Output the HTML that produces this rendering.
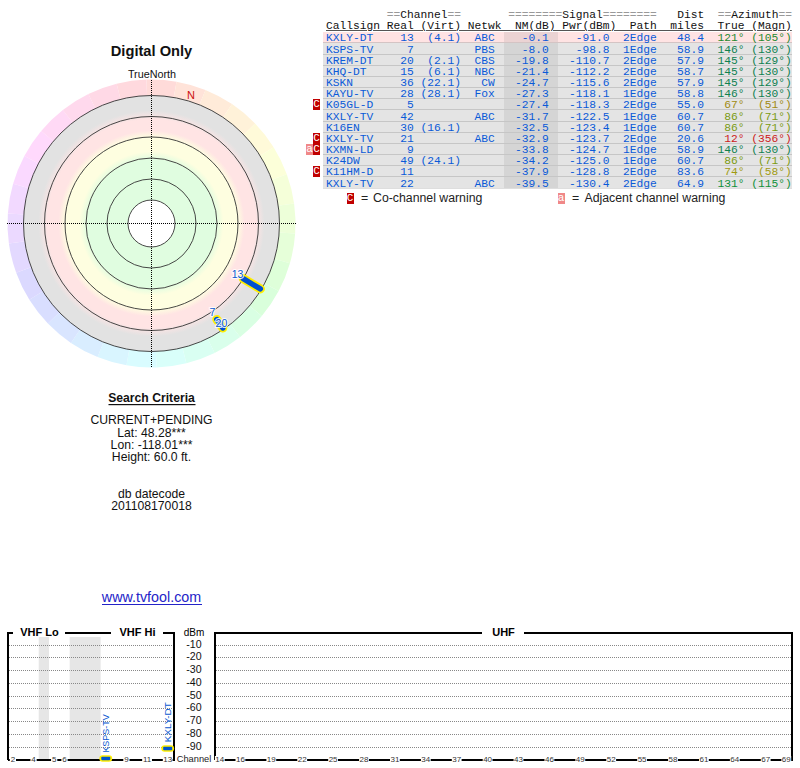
<!DOCTYPE html>
<html><head><meta charset="utf-8">
<style>
html,body{margin:0;padding:0;background:#fff;}
body{width:800px;height:768px;position:relative;overflow:hidden;font-family:"Liberation Sans",sans-serif;color:#111;}
svg{position:absolute;left:0;top:0;}
.row{position:absolute;left:323px;width:469px;box-sizing:border-box;border-bottom:1px solid #c6c6c6;}
.nm{position:absolute;left:181px;width:54px;top:0;bottom:0;}
.tl,.hd{position:absolute;left:326px;font-family:"Liberation Mono",monospace;font-size:11.25px;line-height:12px;white-space:pre;color:#0a5ad8;}
.hd{color:#111;}
.g{color:#999;}
.wc,.wa{position:absolute;width:7px;height:11px;color:#fff;font-family:"Liberation Mono",monospace;font-size:11px;line-height:11px;text-align:center;}
.wc{background:#c00000;}
.wa{background:#f08888;}
</style></head><body>
<svg width="800" height="768" viewBox="0 0 800 768">
<path d="M146.47 79.59 A144 144 0 0 1 176.51 81.69 L173.64 97.94 A127.5 127.5 0 0 0 147.05 96.08 Z" fill="#ffdbd9"/>
<path d="M176.51 81.69 A144 144 0 0 1 205.44 89.99 L199.26 105.28 A127.5 127.5 0 0 0 173.64 97.94 Z" fill="#ffe3d9"/>
<path d="M205.44 89.99 A144 144 0 0 1 232.02 104.12 L222.80 117.80 A127.5 127.5 0 0 0 199.26 105.28 Z" fill="#ffebd9"/>
<path d="M232.02 104.12 A144 144 0 0 1 255.08 123.47 L243.22 134.93 A127.5 127.5 0 0 0 222.80 117.80 Z" fill="#fff2d9"/>
<path d="M255.08 123.47 A144 144 0 0 1 273.62 147.19 L259.63 155.94 A127.5 127.5 0 0 0 243.22 134.93 Z" fill="#fffad9"/>
<path d="M273.62 147.19 A144 144 0 0 1 286.82 174.25 L271.31 179.89 A127.5 127.5 0 0 0 259.63 155.94 Z" fill="#fcffd9"/>
<path d="M286.82 174.25 A144 144 0 0 1 294.10 203.46 L277.76 205.76 A127.5 127.5 0 0 0 271.31 179.89 Z" fill="#f5ffd9"/>
<path d="M294.10 203.46 A144 144 0 0 1 295.15 233.54 L278.69 232.39 A127.5 127.5 0 0 0 277.76 205.76 Z" fill="#edffd9"/>
<path d="M295.15 233.54 A144 144 0 0 1 289.92 263.19 L274.06 258.64 A127.5 127.5 0 0 0 278.69 232.39 Z" fill="#e6ffd9"/>
<path d="M289.92 263.19 A144 144 0 0 1 278.64 291.10 L264.08 283.36 A127.5 127.5 0 0 0 274.06 258.64 Z" fill="#deffd9"/>
<path d="M278.64 291.10 A144 144 0 0 1 261.81 316.06 L249.17 305.46 A127.5 127.5 0 0 0 264.08 283.36 Z" fill="#d9ffdb"/>
<path d="M261.81 316.06 A144 144 0 0 1 240.16 336.97 L230.00 323.97 A127.5 127.5 0 0 0 249.17 305.46 Z" fill="#d9ffe3"/>
<path d="M240.16 336.97 A144 144 0 0 1 214.63 352.93 L207.39 338.10 A127.5 127.5 0 0 0 230.00 323.97 Z" fill="#d9ffeb"/>
<path d="M214.63 352.93 A144 144 0 0 1 186.34 363.22 L182.35 347.21 A127.5 127.5 0 0 0 207.39 338.10 Z" fill="#d9fff2"/>
<path d="M186.34 363.22 A144 144 0 0 1 156.53 367.41 L155.95 350.92 A127.5 127.5 0 0 0 182.35 347.21 Z" fill="#d9fffa"/>
<path d="M156.53 367.41 A144 144 0 0 1 126.49 365.31 L129.36 349.06 A127.5 127.5 0 0 0 155.95 350.92 Z" fill="#d9fcff"/>
<path d="M126.49 365.31 A144 144 0 0 1 97.56 357.01 L103.74 341.72 A127.5 127.5 0 0 0 129.36 349.06 Z" fill="#d9f5ff"/>
<path d="M97.56 357.01 A144 144 0 0 1 70.98 342.88 L80.20 329.20 A127.5 127.5 0 0 0 103.74 341.72 Z" fill="#d9edff"/>
<path d="M70.98 342.88 A144 144 0 0 1 47.92 323.53 L59.78 312.07 A127.5 127.5 0 0 0 80.20 329.20 Z" fill="#d9e5ff"/>
<path d="M47.92 323.53 A144 144 0 0 1 29.38 299.81 L43.37 291.06 A127.5 127.5 0 0 0 59.78 312.07 Z" fill="#d9deff"/>
<path d="M29.38 299.81 A144 144 0 0 1 16.18 272.75 L31.69 267.11 A127.5 127.5 0 0 0 43.37 291.06 Z" fill="#dbd9ff"/>
<path d="M16.18 272.75 A144 144 0 0 1 8.90 243.54 L25.24 241.24 A127.5 127.5 0 0 0 31.69 267.11 Z" fill="#e3d9ff"/>
<path d="M8.90 243.54 A144 144 0 0 1 7.85 213.46 L24.31 214.61 A127.5 127.5 0 0 0 25.24 241.24 Z" fill="#ebd9ff"/>
<path d="M7.85 213.46 A144 144 0 0 1 13.08 183.81 L28.94 188.36 A127.5 127.5 0 0 0 24.31 214.61 Z" fill="#f2d9ff"/>
<path d="M13.08 183.81 A144 144 0 0 1 24.36 155.90 L38.92 163.64 A127.5 127.5 0 0 0 28.94 188.36 Z" fill="#fad9ff"/>
<path d="M24.36 155.90 A144 144 0 0 1 41.19 130.94 L53.83 141.54 A127.5 127.5 0 0 0 38.92 163.64 Z" fill="#ffd9fc"/>
<path d="M41.19 130.94 A144 144 0 0 1 62.84 110.03 L73.00 123.03 A127.5 127.5 0 0 0 53.83 141.54 Z" fill="#ffd9f5"/>
<path d="M62.84 110.03 A144 144 0 0 1 88.37 94.07 L95.61 108.90 A127.5 127.5 0 0 0 73.00 123.03 Z" fill="#ffd9ed"/>
<path d="M88.37 94.07 A144 144 0 0 1 116.66 83.78 L120.65 99.79 A127.5 127.5 0 0 0 95.61 108.90 Z" fill="#ffd9e6"/>
<path d="M116.66 83.78 A144 144 0 0 1 146.47 79.59 L147.05 96.08 A127.5 127.5 0 0 0 120.65 99.79 Z" fill="#ffd9de"/>
<defs><radialGradient id="bands" cx="151.5" cy="223.5" r="128" gradientUnits="userSpaceOnUse">
<stop offset="0" stop-color="#e0fde0"/>
<stop offset="0.5000" stop-color="#e0fde0"/>
<stop offset="0.5625" stop-color="#fefee0"/>
<stop offset="0.6719" stop-color="#fefee0"/>
<stop offset="0.7266" stop-color="#ffe4e4"/>
<stop offset="0.8125" stop-color="#ffe4e4"/>
<stop offset="0.8828" stop-color="#e2e2e2"/>
<stop offset="1" stop-color="#e2e2e2"/>
</radialGradient></defs>
<circle cx="151.5" cy="223.5" r="128" fill="url(#bands)"/>
<circle cx="151.5" cy="223.5" r="23.5" fill="#fff"/>
<circle cx="151.5" cy="223.5" r="23.5" fill="none" stroke="#333" stroke-width="0.9"/>
<circle cx="151.5" cy="223.5" r="44.5" fill="none" stroke="#333" stroke-width="0.9"/>
<circle cx="151.5" cy="223.5" r="65.5" fill="none" stroke="#333" stroke-width="0.9"/>
<circle cx="151.5" cy="223.5" r="86.5" fill="none" stroke="#333" stroke-width="0.9"/>
<circle cx="151.5" cy="223.5" r="107" fill="none" stroke="#333" stroke-width="0.9"/>
<circle cx="151.5" cy="223.5" r="128" fill="none" stroke="#333" stroke-width="0.9"/>
<line x1="7" y1="223.5" x2="297" y2="223.5" stroke="#000" stroke-width="1" stroke-dasharray="1 1"/>
<line x1="151.5" y1="80" x2="151.5" y2="367" stroke="#000" stroke-width="1" stroke-dasharray="1 1"/>
<text x="191" y="99" font-family="Liberation Sans" font-size="11" fill="#cc1010" text-anchor="middle">N</text>
<line x1="243.217" y1="278.609" x2="260.36" y2="288.91" stroke="#ffee00" stroke-width="9" stroke-linecap="round"/><line x1="243.217" y1="278.609" x2="260.36" y2="288.91" stroke="#0050d0" stroke-width="5.4" stroke-linecap="round"/>
<line x1="216.8" y1="319.5" x2="222.8" y2="328" stroke="#ffee00" stroke-width="9" stroke-linecap="round"/><line x1="216.8" y1="319.5" x2="222.8" y2="328" stroke="#0050d0" stroke-width="5.4" stroke-linecap="round"/>
<text x="237.6" y="278.3" font-family="Liberation Sans" font-size="10.5" text-anchor="middle" fill="none" stroke="#fff" stroke-width="2.2" stroke-opacity="0.85" stroke-linejoin="round">13</text><text x="237.6" y="278.3" font-family="Liberation Sans" font-size="10.5" text-anchor="middle" fill="#0a58d0">13</text>
<text x="212.4" y="315.5" font-family="Liberation Sans" font-size="10.5" text-anchor="middle" fill="none" stroke="#fff" stroke-width="2.2" stroke-opacity="0.85" stroke-linejoin="round">7</text><text x="212.4" y="315.5" font-family="Liberation Sans" font-size="10.5" text-anchor="middle" fill="#0a58d0">7</text>
<text x="221.4" y="326.7" font-family="Liberation Sans" font-size="10.5" text-anchor="middle" fill="none" stroke="#fff" stroke-width="2.2" stroke-opacity="0.85" stroke-linejoin="round">20</text><text x="221.4" y="326.7" font-family="Liberation Sans" font-size="10.5" text-anchor="middle" fill="#0a58d0">20</text>
<rect x="38.70" y="637" width="10.32" height="122" fill="#e6e6e6"/>
<rect x="69.66" y="637" width="30.96" height="122" fill="#e6e6e6"/>
<line x1="9" y1="645.5" x2="172" y2="645.5" stroke="#888" stroke-width="1" stroke-dasharray="1 1"/>
<line x1="216" y1="645.5" x2="791" y2="645.5" stroke="#888" stroke-width="1" stroke-dasharray="1 1"/>
<line x1="9" y1="657.5" x2="172" y2="657.5" stroke="#888" stroke-width="1" stroke-dasharray="1 1"/>
<line x1="216" y1="657.5" x2="791" y2="657.5" stroke="#888" stroke-width="1" stroke-dasharray="1 1"/>
<line x1="9" y1="670.5" x2="172" y2="670.5" stroke="#888" stroke-width="1" stroke-dasharray="1 1"/>
<line x1="216" y1="670.5" x2="791" y2="670.5" stroke="#888" stroke-width="1" stroke-dasharray="1 1"/>
<line x1="9" y1="683.5" x2="172" y2="683.5" stroke="#888" stroke-width="1" stroke-dasharray="1 1"/>
<line x1="216" y1="683.5" x2="791" y2="683.5" stroke="#888" stroke-width="1" stroke-dasharray="1 1"/>
<line x1="9" y1="696.5" x2="172" y2="696.5" stroke="#888" stroke-width="1" stroke-dasharray="1 1"/>
<line x1="216" y1="696.5" x2="791" y2="696.5" stroke="#888" stroke-width="1" stroke-dasharray="1 1"/>
<line x1="9" y1="708.5" x2="172" y2="708.5" stroke="#888" stroke-width="1" stroke-dasharray="1 1"/>
<line x1="216" y1="708.5" x2="791" y2="708.5" stroke="#888" stroke-width="1" stroke-dasharray="1 1"/>
<line x1="9" y1="721.5" x2="172" y2="721.5" stroke="#888" stroke-width="1" stroke-dasharray="1 1"/>
<line x1="216" y1="721.5" x2="791" y2="721.5" stroke="#888" stroke-width="1" stroke-dasharray="1 1"/>
<line x1="9" y1="734.5" x2="172" y2="734.5" stroke="#888" stroke-width="1" stroke-dasharray="1 1"/>
<line x1="216" y1="734.5" x2="791" y2="734.5" stroke="#888" stroke-width="1" stroke-dasharray="1 1"/>
<line x1="9" y1="747.5" x2="172" y2="747.5" stroke="#888" stroke-width="1" stroke-dasharray="1 1"/>
<line x1="216" y1="747.5" x2="791" y2="747.5" stroke="#888" stroke-width="1" stroke-dasharray="1 1"/>
<path d="M8 760 V633 H13 M65 633 H111 M163 633 H174 V760 H8" fill="none" stroke="#000" stroke-width="2"/>
<path d="M215 760 V633 H482 M524 633 H792 V760 H215" fill="none" stroke="#000" stroke-width="2"/>
<text x="39.5" y="636" font-family="Liberation Sans" font-weight="bold" font-size="11" text-anchor="middle">VHF Lo</text>
<text x="137.5" y="636" font-family="Liberation Sans" font-weight="bold" font-size="11" text-anchor="middle">VHF Hi</text>
<text x="503.5" y="636" font-family="Liberation Sans" font-weight="bold" font-size="11" text-anchor="middle">UHF</text>
<text x="194" y="635.5" font-family="Liberation Sans" font-size="10" text-anchor="middle">dBm</text>
<text x="194" y="647.5" font-family="Liberation Sans" font-size="10.6" text-anchor="middle" fill="#111">-10</text>
<text x="194" y="660.2" font-family="Liberation Sans" font-size="10.6" text-anchor="middle" fill="#111">-20</text>
<text x="194" y="673.0" font-family="Liberation Sans" font-size="10.6" text-anchor="middle" fill="#111">-30</text>
<text x="194" y="685.7" font-family="Liberation Sans" font-size="10.6" text-anchor="middle" fill="#111">-40</text>
<text x="194" y="698.5" font-family="Liberation Sans" font-size="10.6" text-anchor="middle" fill="#111">-50</text>
<text x="194" y="711.2" font-family="Liberation Sans" font-size="10.6" text-anchor="middle" fill="#111">-60</text>
<text x="194" y="724.0" font-family="Liberation Sans" font-size="10.6" text-anchor="middle" fill="#111">-70</text>
<text x="194" y="736.7" font-family="Liberation Sans" font-size="10.6" text-anchor="middle" fill="#111">-80</text>
<text x="194" y="749.5" font-family="Liberation Sans" font-size="10.6" text-anchor="middle" fill="#111">-90</text>
<text x="194" y="761.5" font-family="Liberation Sans" font-size="9.6" text-anchor="middle" textLength="34.5" lengthAdjust="spacingAndGlyphs" fill="#222">Channel</text>
<rect x="9.80" y="756" width="6.20" height="7" fill="#fff"/><text x="12.90" y="762" font-family="Liberation Sans" font-size="8" text-anchor="middle" fill="#333">2</text>
<rect x="30.44" y="756" width="6.20" height="7" fill="#fff"/><text x="33.54" y="762" font-family="Liberation Sans" font-size="8" text-anchor="middle" fill="#333">4</text>
<rect x="51.08" y="756" width="6.20" height="7" fill="#fff"/><text x="54.18" y="762" font-family="Liberation Sans" font-size="8" text-anchor="middle" fill="#333">5</text>
<rect x="61.40" y="756" width="6.20" height="7" fill="#fff"/><text x="64.50" y="762" font-family="Liberation Sans" font-size="8" text-anchor="middle" fill="#333">6</text>
<rect x="123.32" y="756" width="6.20" height="7" fill="#fff"/><text x="126.42" y="762" font-family="Liberation Sans" font-size="8" text-anchor="middle" fill="#333">9</text>
<rect x="142.16" y="756" width="9.80" height="7" fill="#fff"/><text x="147.06" y="762" font-family="Liberation Sans" font-size="8" text-anchor="middle" fill="#333">11</text>
<rect x="162.80" y="756" width="9.80" height="7" fill="#fff"/><text x="167.70" y="762" font-family="Liberation Sans" font-size="8" text-anchor="middle" fill="#333">13</text>
<rect x="214.90" y="756" width="9.80" height="7" fill="#fff"/><text x="219.80" y="762" font-family="Liberation Sans" font-size="8" text-anchor="middle" fill="#333">14</text>
<rect x="235.50" y="756" width="9.80" height="7" fill="#fff"/><text x="240.40" y="762" font-family="Liberation Sans" font-size="8" text-anchor="middle" fill="#333">16</text>
<rect x="266.40" y="756" width="9.80" height="7" fill="#fff"/><text x="271.30" y="762" font-family="Liberation Sans" font-size="8" text-anchor="middle" fill="#333">19</text>
<rect x="297.30" y="756" width="9.80" height="7" fill="#fff"/><text x="302.20" y="762" font-family="Liberation Sans" font-size="8" text-anchor="middle" fill="#333">22</text>
<rect x="328.20" y="756" width="9.80" height="7" fill="#fff"/><text x="333.10" y="762" font-family="Liberation Sans" font-size="8" text-anchor="middle" fill="#333">25</text>
<rect x="359.10" y="756" width="9.80" height="7" fill="#fff"/><text x="364.00" y="762" font-family="Liberation Sans" font-size="8" text-anchor="middle" fill="#333">28</text>
<rect x="390.00" y="756" width="9.80" height="7" fill="#fff"/><text x="394.90" y="762" font-family="Liberation Sans" font-size="8" text-anchor="middle" fill="#333">31</text>
<rect x="420.90" y="756" width="9.80" height="7" fill="#fff"/><text x="425.80" y="762" font-family="Liberation Sans" font-size="8" text-anchor="middle" fill="#333">34</text>
<rect x="451.80" y="756" width="9.80" height="7" fill="#fff"/><text x="456.70" y="762" font-family="Liberation Sans" font-size="8" text-anchor="middle" fill="#333">37</text>
<rect x="482.70" y="756" width="9.80" height="7" fill="#fff"/><text x="487.60" y="762" font-family="Liberation Sans" font-size="8" text-anchor="middle" fill="#333">40</text>
<rect x="513.60" y="756" width="9.80" height="7" fill="#fff"/><text x="518.50" y="762" font-family="Liberation Sans" font-size="8" text-anchor="middle" fill="#333">43</text>
<rect x="544.50" y="756" width="9.80" height="7" fill="#fff"/><text x="549.40" y="762" font-family="Liberation Sans" font-size="8" text-anchor="middle" fill="#333">46</text>
<rect x="575.40" y="756" width="9.80" height="7" fill="#fff"/><text x="580.30" y="762" font-family="Liberation Sans" font-size="8" text-anchor="middle" fill="#333">49</text>
<rect x="606.30" y="756" width="9.80" height="7" fill="#fff"/><text x="611.20" y="762" font-family="Liberation Sans" font-size="8" text-anchor="middle" fill="#333">52</text>
<rect x="637.20" y="756" width="9.80" height="7" fill="#fff"/><text x="642.10" y="762" font-family="Liberation Sans" font-size="8" text-anchor="middle" fill="#333">55</text>
<rect x="668.10" y="756" width="9.80" height="7" fill="#fff"/><text x="673.00" y="762" font-family="Liberation Sans" font-size="8" text-anchor="middle" fill="#333">58</text>
<rect x="699.00" y="756" width="9.80" height="7" fill="#fff"/><text x="703.90" y="762" font-family="Liberation Sans" font-size="8" text-anchor="middle" fill="#333">61</text>
<rect x="729.90" y="756" width="9.80" height="7" fill="#fff"/><text x="734.80" y="762" font-family="Liberation Sans" font-size="8" text-anchor="middle" fill="#333">64</text>
<rect x="760.80" y="756" width="9.80" height="7" fill="#fff"/><text x="765.70" y="762" font-family="Liberation Sans" font-size="8" text-anchor="middle" fill="#333">67</text>
<rect x="781.40" y="756" width="9.80" height="7" fill="#fff"/><text x="786.30" y="762" font-family="Liberation Sans" font-size="8" text-anchor="middle" fill="#333">69</text>
<rect x="99.38" y="755.17" width="12.8" height="6.6" rx="3.3" fill="#ffee00"/><rect x="101.28" y="756.77" width="9" height="3.4" rx="0.8" fill="#0055cc"/>
<rect x="161.30" y="745.23" width="12.8" height="6.6" rx="3.3" fill="#ffee00"/><rect x="163.20" y="746.82" width="9" height="3.4" rx="0.8" fill="#0055cc"/>
<text transform="translate(109.18 752.60) rotate(-90)" font-family="Liberation Sans" font-size="9.2" fill="#0a58d0" textLength="38.2" lengthAdjust="spacingAndGlyphs">KSPS-TV</text>
<text transform="translate(171.10 742.30) rotate(-90)" font-family="Liberation Sans" font-size="9.5" fill="#0a58d0" textLength="40.1" lengthAdjust="spacingAndGlyphs">KXLY-DT</text>
<text x="151.5" y="56" font-family="Liberation Sans" font-size="15.2" font-weight="bold" fill="#111" text-anchor="middle" textLength="81.5" lengthAdjust="spacingAndGlyphs">Digital Only</text>
<text x="152" y="78" font-family="Liberation Sans" font-size="10.8" font-weight="normal" fill="#111" text-anchor="middle" >TrueNorth</text>
<text x="151.5" y="402" font-family="Liberation Sans" font-size="12.2" font-weight="bold" fill="#111" text-anchor="middle" >Search Criteria</text>
<rect x="108.5" y="404" width="87" height="1.2" fill="#111"/>
<text x="151.5" y="424" font-family="Liberation Sans" font-size="12.2" font-weight="normal" fill="#111" text-anchor="middle" >CURRENT+PENDING</text>
<text x="151.5" y="436.5" font-family="Liberation Sans" font-size="12.2" font-weight="normal" fill="#111" text-anchor="middle" >Lat: 48.28***</text>
<text x="151.5" y="448.7" font-family="Liberation Sans" font-size="12.2" font-weight="normal" fill="#111" text-anchor="middle" >Lon: -118.01***</text>
<text x="151.5" y="460.5" font-family="Liberation Sans" font-size="12.2" font-weight="normal" fill="#111" text-anchor="middle" >Height: 60.0 ft.</text>
<text x="151.5" y="497.8" font-family="Liberation Sans" font-size="12.2" font-weight="normal" fill="#111" text-anchor="middle" >db datecode</text>
<text x="151.5" y="510" font-family="Liberation Sans" font-size="12.2" font-weight="normal" fill="#111" text-anchor="middle" >201108170018</text>
<text x="151.5" y="602.3" font-family="Liberation Sans" font-size="14.3" font-weight="normal" fill="#2323c8" text-anchor="middle" >www.tvfool.com</text>
<rect x="102" y="604" width="100" height="1" fill="#2323c8"/>
<text x="361" y="202" font-family="Liberation Sans" font-size="12.3" font-weight="normal" fill="#222" text-anchor="start" >=</text>
<text x="373" y="202" font-family="Liberation Sans" font-size="12.3" font-weight="normal" fill="#222" text-anchor="start" >Co-channel warning</text>
<text x="572" y="202" font-family="Liberation Sans" font-size="12.3" font-weight="normal" fill="#222" text-anchor="start" >=</text>
<text x="584.5" y="202" font-family="Liberation Sans" font-size="12.3" font-weight="normal" fill="#222" text-anchor="start" >Adjacent channel warning</text>
</svg>
<div class="row" style="top:32px;height:11px;background:#ffe3e3;border-bottom-color:#d4c4c4"><div class="nm" style="background:#ebd3d3"></div></div>
<div class="tl" style="top:32.00px">KXLY-DT&#160;&#160;&#160;&#160;13&#160;&#160;(4.1)&#160;&#160;ABC&#160;&#160;&#160;&#160;-0.1&#160;&#160;&#160;&#160;-91.0&#160;&#160;2Edge&#160;&#160;&#160;48.4&#160;&#160;</div>
<div class="tl" style="top:32.00px;left:717.50px;color:#1e8a30">121°&#160;(105°)</div>
<div class="row" style="top:43px;height:12px;background:#e4e4e4;border-bottom-color:#c6c6c6"><div class="nm" style="background:#d5d5d5"></div></div>
<div class="tl" style="top:44.00px">KSPS-TV&#160;&#160;&#160;&#160;&#160;7&#160;&#160;&#160;&#160;&#160;&#160;&#160;&#160;&#160;PBS&#160;&#160;&#160;&#160;-8.0&#160;&#160;&#160;&#160;-98.8&#160;&#160;1Edge&#160;&#160;&#160;58.9&#160;&#160;</div>
<div class="tl" style="top:44.00px;left:717.50px;color:#0f8050">146°&#160;(130°)</div>
<div class="row" style="top:55px;height:11px;background:#e4e4e4;border-bottom-color:#c6c6c6"><div class="nm" style="background:#d5d5d5"></div></div>
<div class="tl" style="top:55.00px">KREM-DT&#160;&#160;&#160;&#160;20&#160;&#160;(2.1)&#160;&#160;CBS&#160;&#160;&#160;-19.8&#160;&#160;&#160;-110.7&#160;&#160;2Edge&#160;&#160;&#160;57.9&#160;&#160;</div>
<div class="tl" style="top:55.00px;left:717.50px;color:#0f8050">145°&#160;(129°)</div>
<div class="row" style="top:66px;height:11px;background:#e4e4e4;border-bottom-color:#c6c6c6"><div class="nm" style="background:#d5d5d5"></div></div>
<div class="tl" style="top:66.00px">KHQ-DT&#160;&#160;&#160;&#160;&#160;15&#160;&#160;(6.1)&#160;&#160;NBC&#160;&#160;&#160;-21.4&#160;&#160;&#160;-112.2&#160;&#160;2Edge&#160;&#160;&#160;58.7&#160;&#160;</div>
<div class="tl" style="top:66.00px;left:717.50px;color:#0f8050">145°&#160;(130°)</div>
<div class="row" style="top:77px;height:11px;background:#e4e4e4;border-bottom-color:#c6c6c6"><div class="nm" style="background:#d5d5d5"></div></div>
<div class="tl" style="top:77.00px">KSKN&#160;&#160;&#160;&#160;&#160;&#160;&#160;36&#160;(22.1)&#160;&#160;&#160;CW&#160;&#160;&#160;-24.7&#160;&#160;&#160;-115.6&#160;&#160;2Edge&#160;&#160;&#160;57.9&#160;&#160;</div>
<div class="tl" style="top:77.00px;left:717.50px;color:#0f8050">145°&#160;(129°)</div>
<div class="row" style="top:88px;height:11px;background:#e4e4e4;border-bottom-color:#c6c6c6"><div class="nm" style="background:#d5d5d5"></div></div>
<div class="tl" style="top:88.00px">KAYU-TV&#160;&#160;&#160;&#160;28&#160;(28.1)&#160;&#160;Fox&#160;&#160;&#160;-27.3&#160;&#160;&#160;-118.1&#160;&#160;1Edge&#160;&#160;&#160;58.8&#160;&#160;</div>
<div class="tl" style="top:88.00px;left:717.50px;color:#0f8050">146°&#160;(130°)</div>
<div class="row" style="top:99px;height:11px;background:#e4e4e4;border-bottom-color:#c6c6c6"><div class="nm" style="background:#d5d5d5"></div></div>
<div class="tl" style="top:99.00px">K05GL-D&#160;&#160;&#160;&#160;&#160;5&#160;&#160;&#160;&#160;&#160;&#160;&#160;&#160;&#160;&#160;&#160;&#160;&#160;&#160;&#160;-27.4&#160;&#160;&#160;-118.3&#160;&#160;2Edge&#160;&#160;&#160;55.0&#160;&#160;</div>
<div class="tl" style="top:99.00px;left:717.50px;color:#a08a10">&#160;67°&#160;&#160;(51°)</div>
<div class="wc" style="top:99px;left:313px">C</div>
<div class="row" style="top:110px;height:12px;background:#e4e4e4;border-bottom-color:#c6c6c6"><div class="nm" style="background:#d5d5d5"></div></div>
<div class="tl" style="top:111.00px">KXLY-TV&#160;&#160;&#160;&#160;42&#160;&#160;&#160;&#160;&#160;&#160;&#160;&#160;&#160;ABC&#160;&#160;&#160;-31.7&#160;&#160;&#160;-122.5&#160;&#160;1Edge&#160;&#160;&#160;60.7&#160;&#160;</div>
<div class="tl" style="top:111.00px;left:717.50px;color:#7a9a10">&#160;86°&#160;&#160;(71°)</div>
<div class="row" style="top:122px;height:11px;background:#e4e4e4;border-bottom-color:#c6c6c6"><div class="nm" style="background:#d5d5d5"></div></div>
<div class="tl" style="top:122.00px">K16EN&#160;&#160;&#160;&#160;&#160;&#160;30&#160;(16.1)&#160;&#160;&#160;&#160;&#160;&#160;&#160;&#160;-32.5&#160;&#160;&#160;-123.4&#160;&#160;1Edge&#160;&#160;&#160;60.7&#160;&#160;</div>
<div class="tl" style="top:122.00px;left:717.50px;color:#7a9a10">&#160;86°&#160;&#160;(71°)</div>
<div class="row" style="top:133px;height:11px;background:#e4e4e4;border-bottom-color:#c6c6c6"><div class="nm" style="background:#d5d5d5"></div></div>
<div class="tl" style="top:133.00px">KXLY-TV&#160;&#160;&#160;&#160;21&#160;&#160;&#160;&#160;&#160;&#160;&#160;&#160;&#160;ABC&#160;&#160;&#160;-32.9&#160;&#160;&#160;-123.7&#160;&#160;2Edge&#160;&#160;&#160;20.6&#160;&#160;</div>
<div class="tl" style="top:133.00px;left:717.50px;color:#cc2020">&#160;12°&#160;(356°)</div>
<div class="wc" style="top:133px;left:313px">C</div>
<div class="row" style="top:144px;height:11px;background:#e4e4e4;border-bottom-color:#c6c6c6"><div class="nm" style="background:#d5d5d5"></div></div>
<div class="tl" style="top:144.00px">KXMN-LD&#160;&#160;&#160;&#160;&#160;9&#160;&#160;&#160;&#160;&#160;&#160;&#160;&#160;&#160;&#160;&#160;&#160;&#160;&#160;&#160;-33.8&#160;&#160;&#160;-124.7&#160;&#160;1Edge&#160;&#160;&#160;58.9&#160;&#160;</div>
<div class="tl" style="top:144.00px;left:717.50px;color:#0f8050">146°&#160;(130°)</div>
<div class="wc" style="top:144px;left:313px">C</div>
<div class="wa" style="top:144px;left:306px">a</div>
<div class="row" style="top:155px;height:11px;background:#e4e4e4;border-bottom-color:#c6c6c6"><div class="nm" style="background:#d5d5d5"></div></div>
<div class="tl" style="top:155.00px">K24DW&#160;&#160;&#160;&#160;&#160;&#160;49&#160;(24.1)&#160;&#160;&#160;&#160;&#160;&#160;&#160;&#160;-34.2&#160;&#160;&#160;-125.0&#160;&#160;1Edge&#160;&#160;&#160;60.7&#160;&#160;</div>
<div class="tl" style="top:155.00px;left:717.50px;color:#7a9a10">&#160;86°&#160;&#160;(71°)</div>
<div class="row" style="top:166px;height:11px;background:#e4e4e4;border-bottom-color:#c6c6c6"><div class="nm" style="background:#d5d5d5"></div></div>
<div class="tl" style="top:166.00px">K11HM-D&#160;&#160;&#160;&#160;11&#160;&#160;&#160;&#160;&#160;&#160;&#160;&#160;&#160;&#160;&#160;&#160;&#160;&#160;&#160;-37.9&#160;&#160;&#160;-128.8&#160;&#160;2Edge&#160;&#160;&#160;83.6&#160;&#160;</div>
<div class="tl" style="top:166.00px;left:717.50px;color:#a09a10">&#160;74°&#160;&#160;(58°)</div>
<div class="wc" style="top:166px;left:313px">C</div>
<div class="row" style="top:177px;height:12px;background:#e4e4e4;border-bottom-color:#dedede"><div class="nm" style="background:#d5d5d5"></div></div>
<div class="tl" style="top:178.00px">KXLY-TV&#160;&#160;&#160;&#160;22&#160;&#160;&#160;&#160;&#160;&#160;&#160;&#160;&#160;ABC&#160;&#160;&#160;-39.5&#160;&#160;&#160;-130.4&#160;&#160;2Edge&#160;&#160;&#160;64.9&#160;&#160;</div>
<div class="tl" style="top:178.00px;left:717.50px;color:#10903a">131°&#160;(115°)</div>
<div class="hd" style="top:9.00px">&#160;&#160;&#160;&#160;&#160;&#160;&#160;&#160;&#160;<span class="g">==</span>Channel<span class="g">==</span>&#160;&#160;&#160;&#160;&#160;&#160;&#160;<span class="g">========</span>Signal<span class="g">========</span>&#160;&#160;&#160;Dist&#160;&#160;<span class="g">==</span>Azimuth<span class="g">==</span></div>
<div class="hd" style="top:20.00px"><span style="text-decoration:underline;text-decoration-color:#555">Callsign&#160;Real&#160;(Virt)&#160;Netwk&#160;&#160;NM(dB)&#160;Pwr(dBm)&#160;&#160;Path&#160;&#160;miles&#160;&#160;True&#160;(Magn)</span></div>
<div class="wc" style="top:193px;left:346.5px">C</div>
<div class="wa" style="top:193px;left:557.5px">a</div>
</body></html>
